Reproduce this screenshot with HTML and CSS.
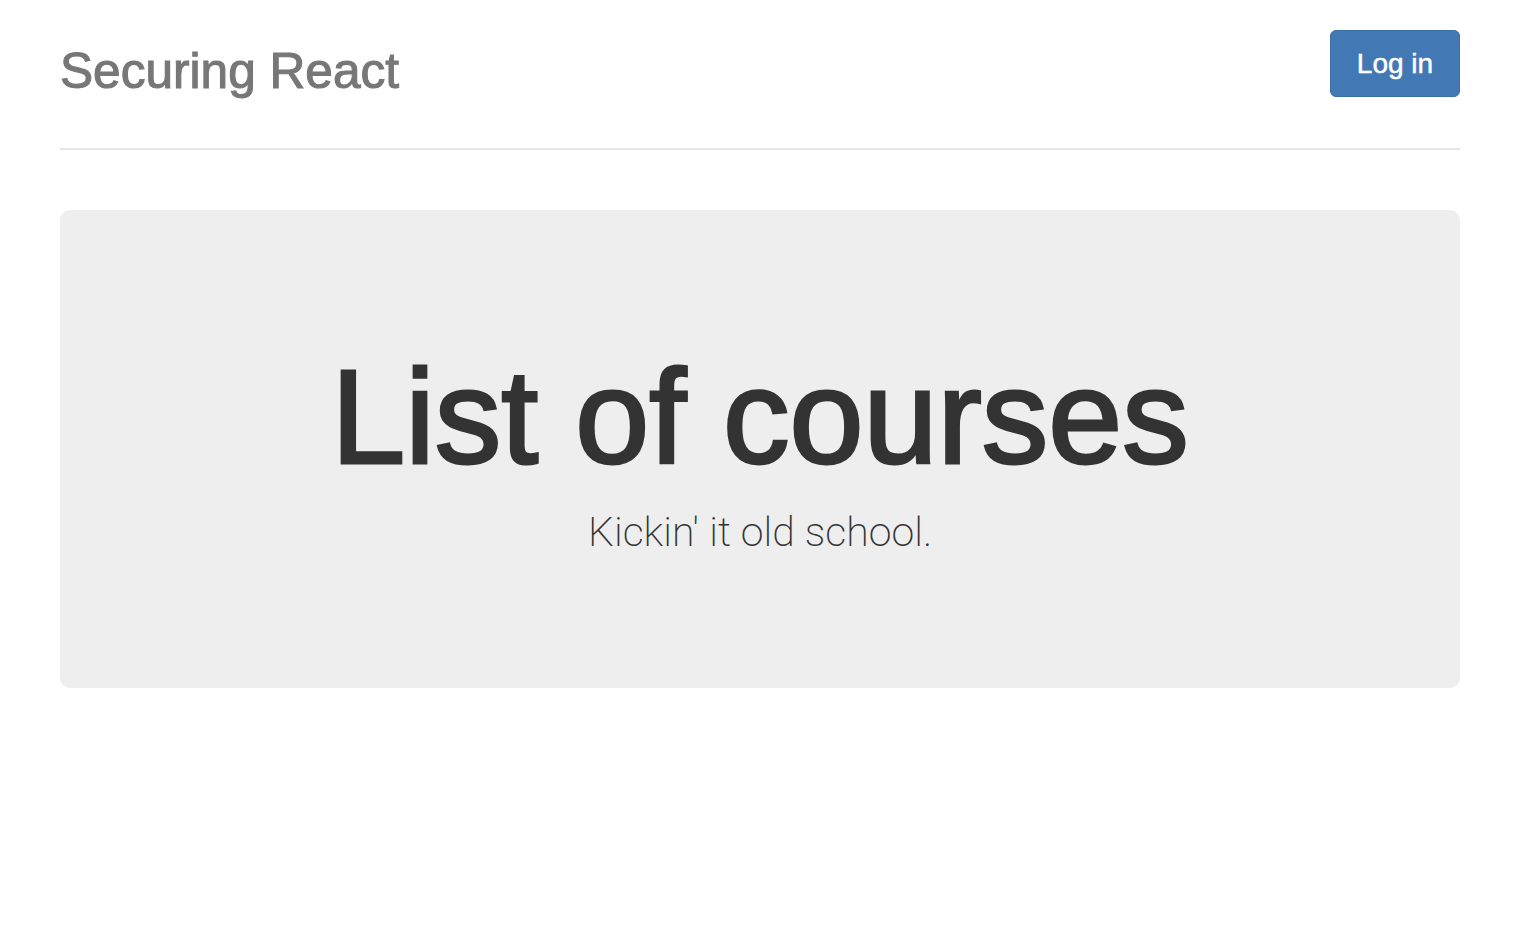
FILE: index.html
```html
<!DOCTYPE html>
<html>
<head>
<meta charset="utf-8">
<title>Securing React</title>
<link rel="stylesheet" href="styles.css">
</head>
<body>
<div class="container">
  <header class="header">
    <h3 class="brand">Securing React</h3>
    <button class="btn-login">Log in</button>
  </header>
  <section class="jumbotron">
    <h1 class="title">List of courses</h1>
    <p class="lead">Kickin' it old school.</p>
  </section>
</div>
</body>
</html>
```
FILE: styles.css
```css
html, body {
  margin: 0;
  padding: 0;
  background: #fff;
}
body {
  font-family: "Liberation Sans", Arial, sans-serif;
  color: #333;
}
.container {
  width: 1400px;
  margin-left: 60px;
}
.header {
  display: flex;
  justify-content: space-between;
  align-items: flex-start;
  padding-top: 30px;
  height: 118px;
  border-bottom: 2px solid #e5e5e5;
}
.brand {
  margin: 14px 0 0 0;
  font-size: 49.6px;
  line-height: 54px;
  font-weight: 400;
  color: #777;
  -webkit-text-stroke: 1.1px #777;
}
.btn-login {
  width: 130px;
  height: 67px;
  margin: 0;
  padding: 0;
  border: 1px solid #3a6ea6;
  border-radius: 6px;
  background: #4279b4;
  color: #fff;
  font-family: "Liberation Sans", Arial, sans-serif;
  font-size: 28px;
  line-height: 1;
  display: flex;
  align-items: center;
  justify-content: center;
  -webkit-text-stroke: 0.5px #fff;
}
.jumbotron {
  margin-top: 60px;
  background: #eee;
  border-radius: 10px;
  padding: 136px 0 127px;
  text-align: center;
}
.title {
  margin: 0;
  font-size: 133px;
  line-height: 143px;
  font-weight: 400;
  color: #333;
  -webkit-text-stroke: 3px #333;
}
.lead {
  margin: 15px 0 0 0;
  font-family: Roboto, "Liberation Sans", sans-serif;
  font-weight: 200;
  font-size: 41px;
  line-height: 57px;
  color: #333;
}
```
